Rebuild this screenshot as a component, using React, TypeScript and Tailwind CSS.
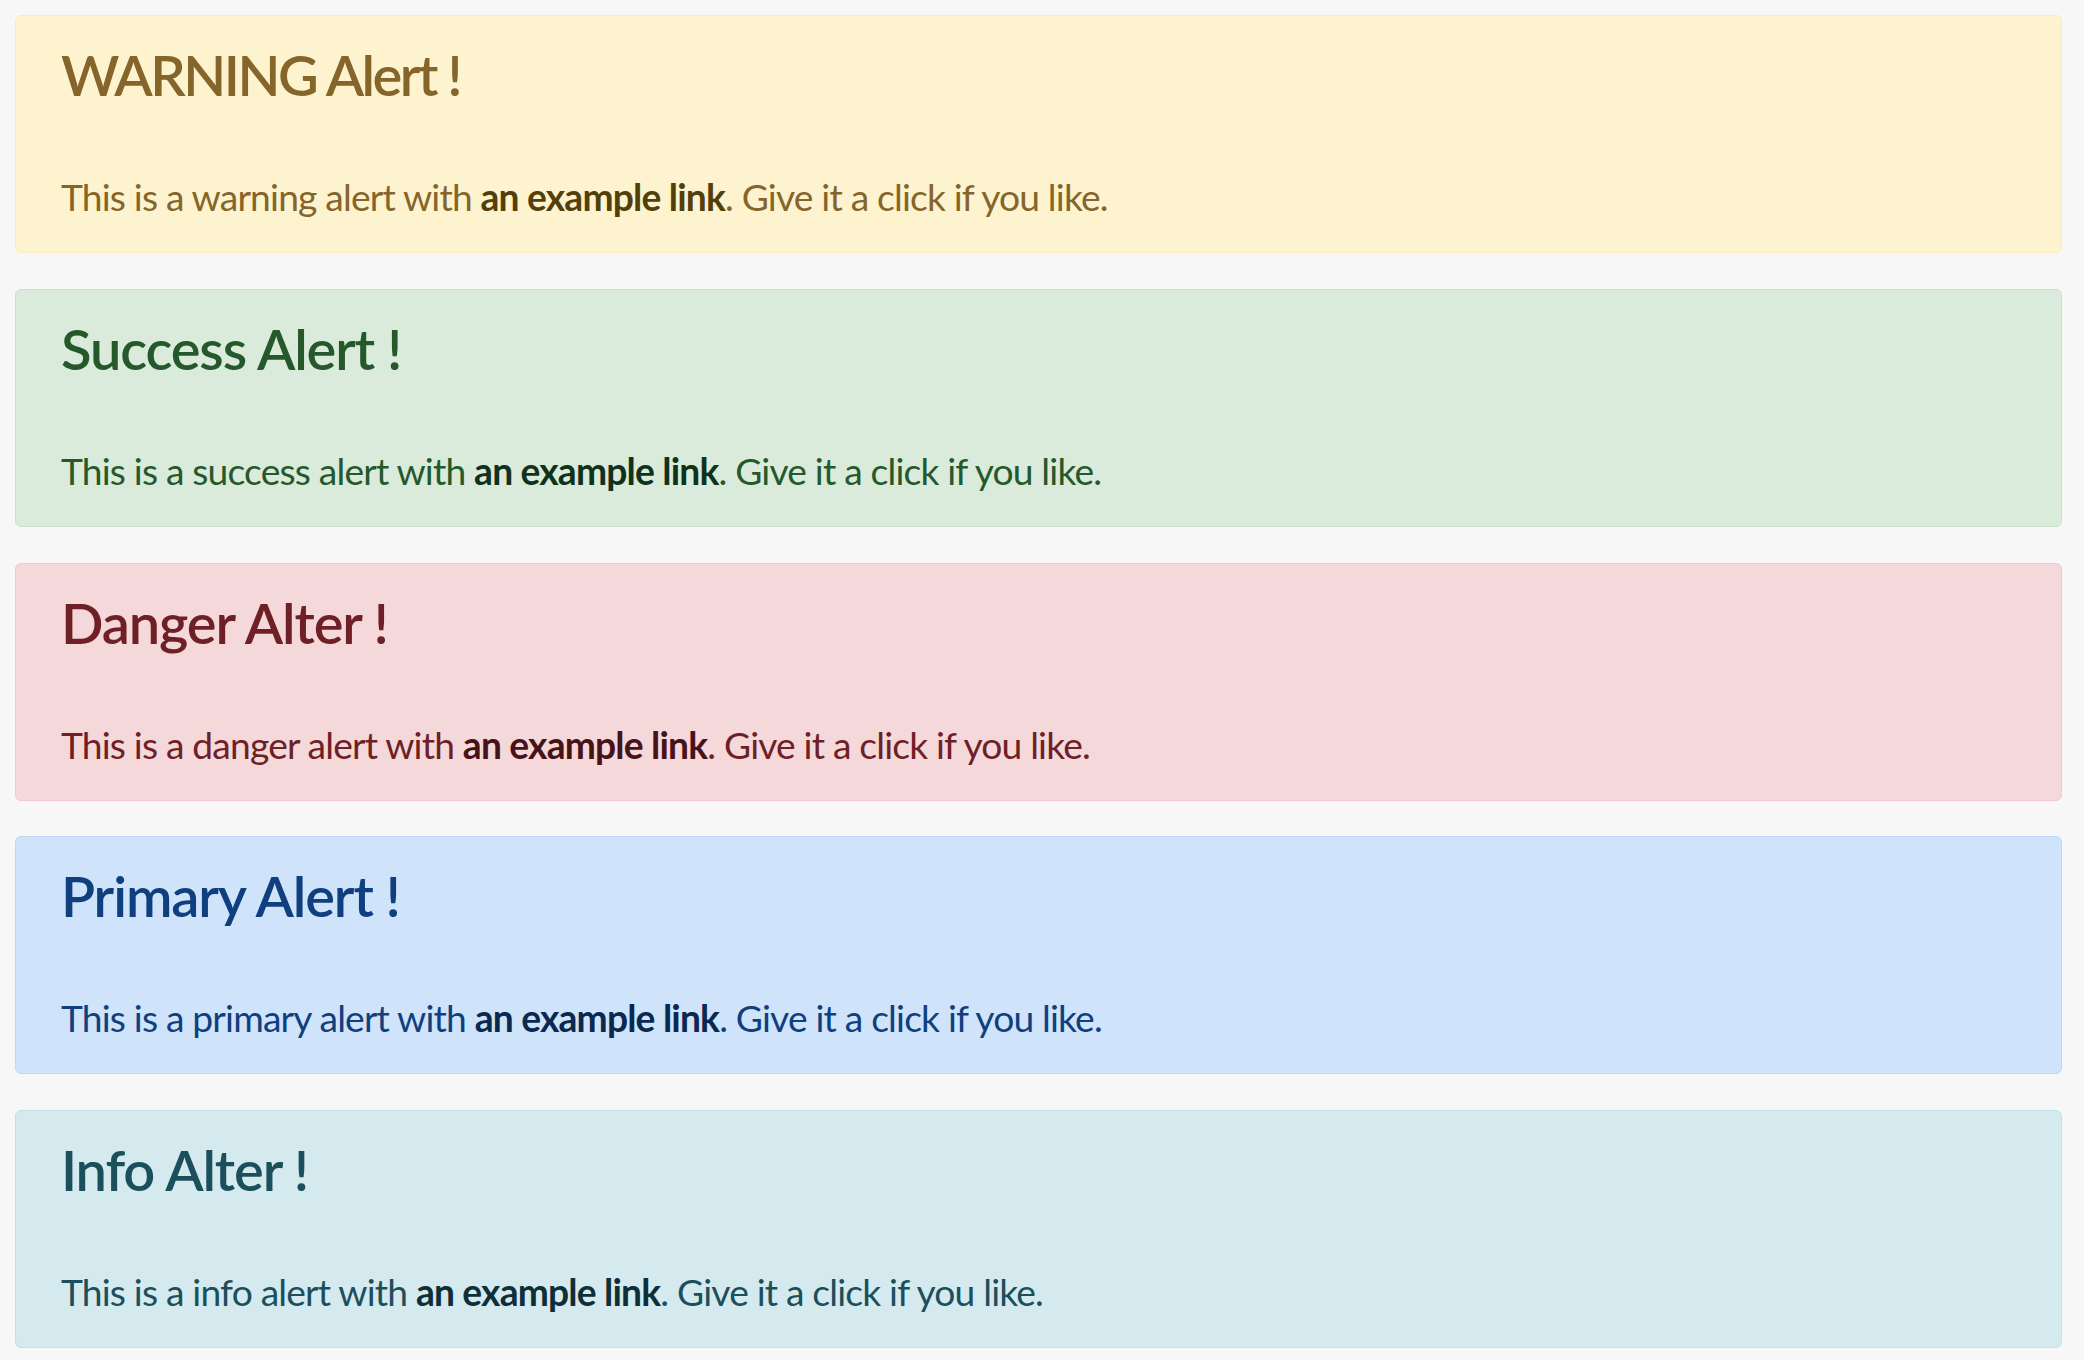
const ALERTS = [
  {
    title: "WARNING Alert !",
    kind: "warning",
    box: "bg-[#fef3cf] border-[#fcecbd] text-[#85652a]",
    link: "text-[#533f0a]",
    tracking: "tracking-[-0.045em]",
  },
  {
    title: "Success Alert !",
    kind: "success",
    box: "bg-[#daebdb] border-[#c8e3cc] text-[#25592b]",
    link: "text-[#10321a]",
    tracking: "tracking-[-0.02em]",
  },
  {
    title: "Danger Alter !",
    kind: "danger",
    box: "bg-[#f5d8da] border-[#f2c8cc] text-[#6f1f26]",
    link: "text-[#471218]",
    tracking: "tracking-[-0.02em]",
  },
  {
    title: "Primary Alert !",
    kind: "primary",
    box: "bg-[#cfe3fa] border-[#bcd8f6] text-[#103f7f]",
    link: "text-[#0a2850]",
    tracking: "tracking-[-0.02em]",
  },
  {
    title: "Info Alter !",
    kind: "info",
    box: "bg-[#d5eaef] border-[#c1e2e8] text-[#1c4f5c]",
    link: "text-[#0f2f38]",
    tracking: "tracking-[-0.02em]",
  },
];

export default function App() {
  return (
    <div className="min-h-screen bg-[#f7f7f7] pt-[15px] font-['Lato',sans-serif]">
      <div className="ml-[15px] flex w-[2047px] flex-col gap-[35.75px]">
        {ALERTS.map((a) => (
          <div
            key={a.kind}
            className={`box-border h-[238px] rounded-[6px] border px-[45px] pt-[25px] ${a.box}`}
          >
            <h4 className={`text-[56px] font-semibold leading-[1.2] ${a.tracking}`}>
              {a.title}
            </h4>
            <p className="mt-[61px] text-[37.2px] leading-[1.5] tracking-[-0.022em]">
              This is a {a.kind} alert with{" "}
              <a href="#" className={`font-bold ${a.link}`}>
                an example link
              </a>
              . Give it a click if you like.
            </p>
          </div>
        ))}
      </div>
    </div>
  );
}
